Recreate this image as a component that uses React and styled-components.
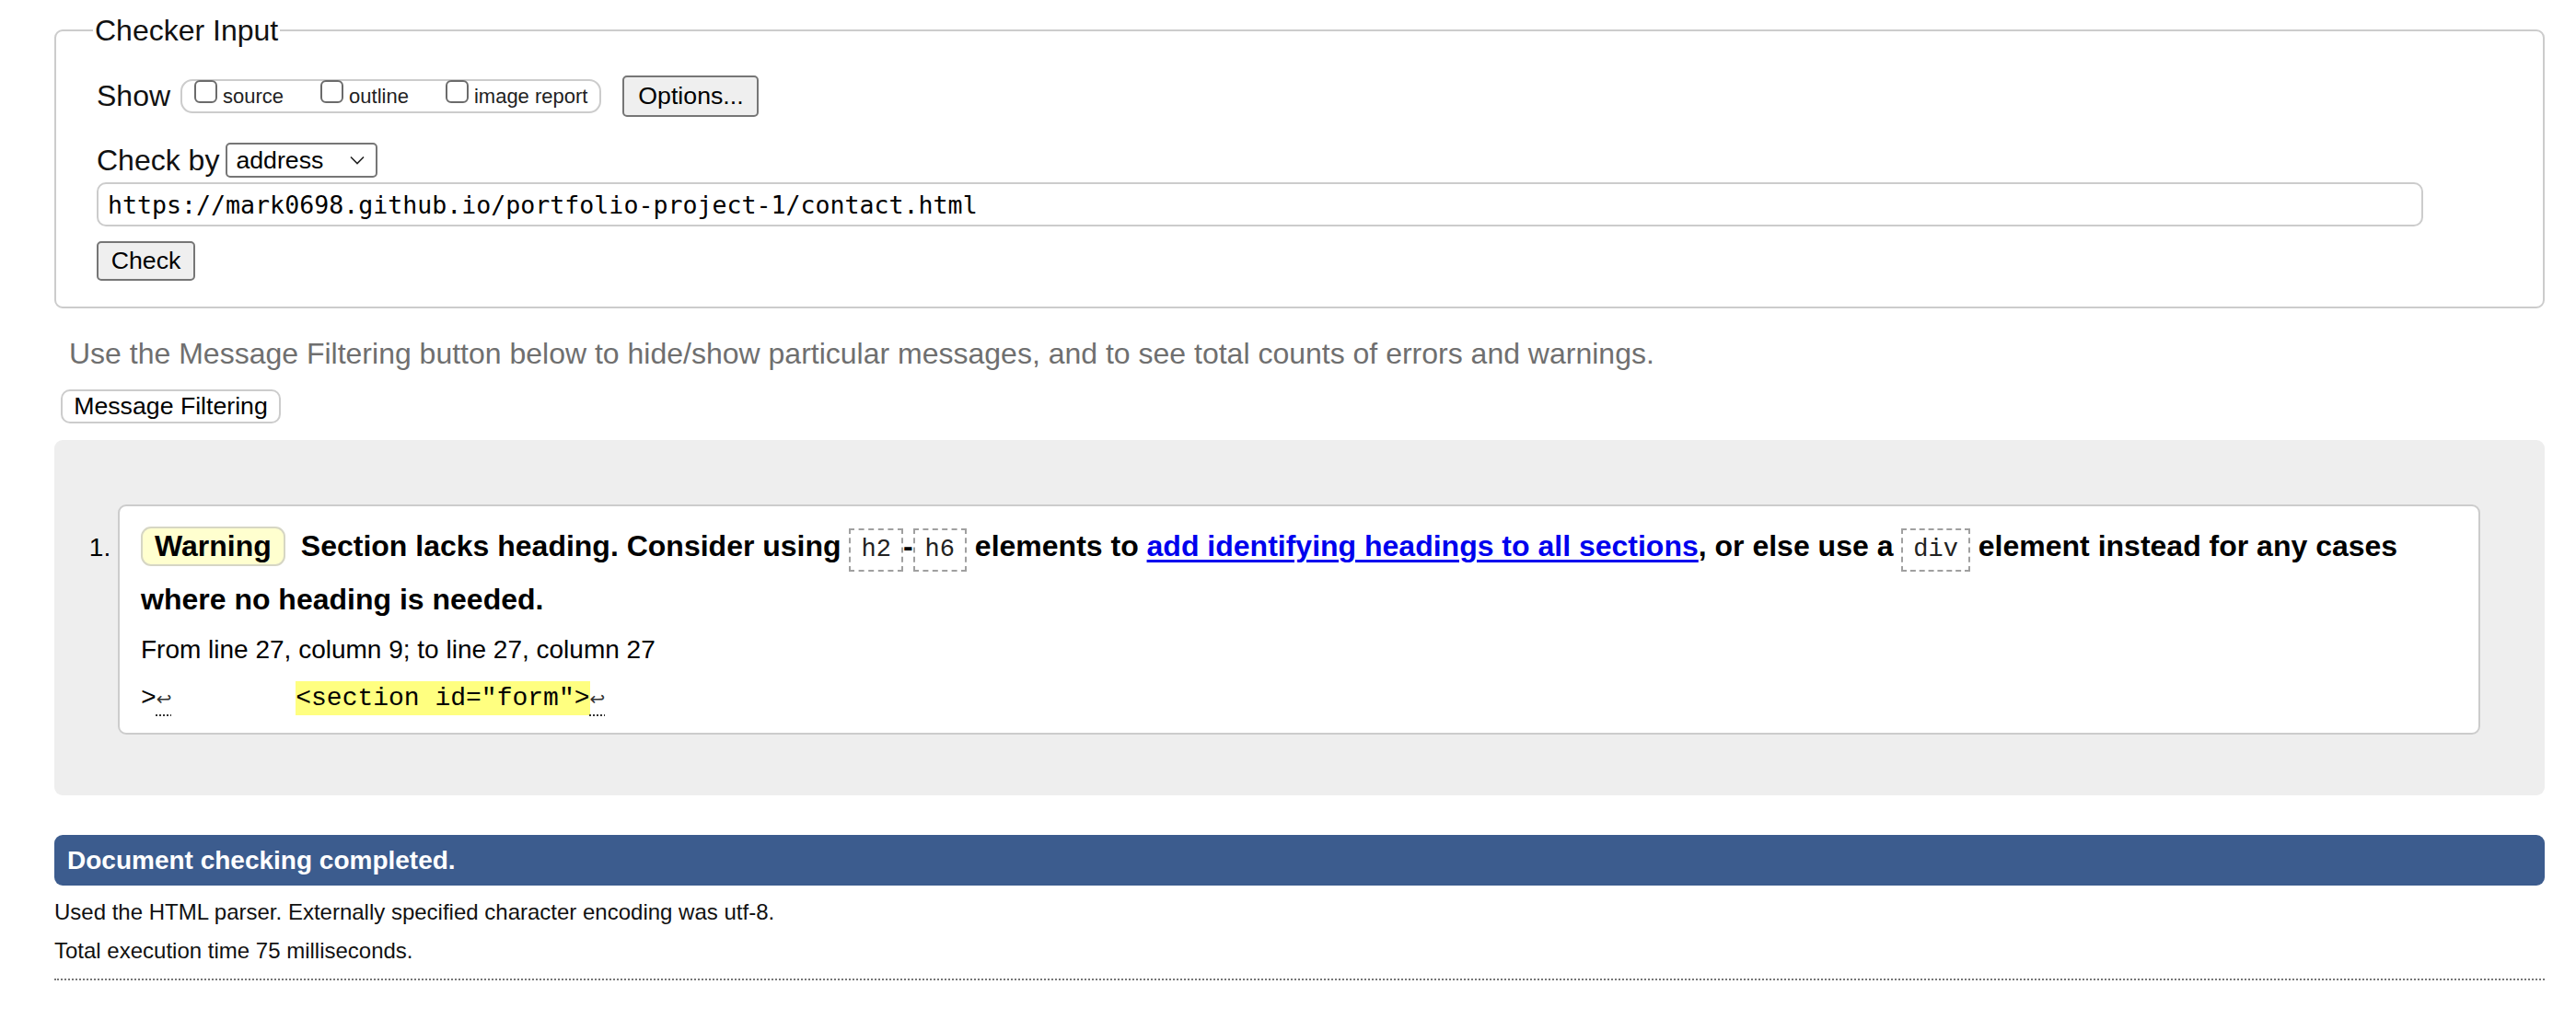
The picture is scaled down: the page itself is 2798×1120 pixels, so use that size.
import React from 'react';
import styled, { createGlobalStyle } from 'styled-components';

const GlobalStyle = createGlobalStyle`
  html, body {
    margin: 0;
    padding: 0;
    background: #fff;
  }
  body {
    font-family: "Liberation Sans", Arial, Helvetica, sans-serif;
    color: #000;
  }
`

const Chevron = () => (
    <svg width="16" height="10" viewBox="0 0 16 10" fill="none">
        <path d="M1 1.5 L8 8.5 L15 1.5" stroke="#222" strokeWidth="1.6" />
    </svg>
)

const App = () => {
    return (
        <Page>
            <GlobalStyle />
            <Fieldset>
                <Legend>Checker Input</Legend>
                <FieldBody>
                    <ShowRow>
                        <Label>Show</Label>
                        <OptionGroup>
                            <Option><Box type="checkbox" /><OptionText>source</OptionText></Option>
                            <Option><Box type="checkbox" /><OptionText>outline</OptionText></Option>
                            <Option last><Box type="checkbox" /><OptionText>image report</OptionText></Option>
                        </OptionGroup>
                        <Button wide>Options...</Button>
                    </ShowRow>
                    <CheckByRow>
                        <Label>Check by</Label>
                        <SelectBox>
                            <span>address</span>
                            <Chevron />
                        </SelectBox>
                    </CheckByRow>
                    <UrlInput readOnly defaultValue="https://mark0698.github.io/portfolio-project-1/contact.html" />
                    <CheckButton>Check</CheckButton>
                </FieldBody>
            </Fieldset>

            <Hint>Use the Message Filtering button below to hide/show particular messages, and to see total counts of errors and warnings.</Hint>
            <FilterButton>Message Filtering</FilterButton>

            <Results>
                <Item>
                    <Message>
                        <Badge>Warning</Badge>Section lacks heading. Consider using <Code>h2</Code>-<Code>h6</Code> elements to <Link href="#">add identifying headings to all sections</Link>, or else use a <Code>div</Code> element instead for any cases where no heading is needed.
                    </Message>
                    <Location>From line 27, column 9; to line 27, column 27</Location>
                    <Extract>
                        &gt;<Newline>↩</Newline>{'        '}<Highlight>&lt;section id="form"&gt;</Highlight><Newline>↩</Newline>
                    </Extract>
                </Item>
            </Results>

            <Completed>Document checking completed.</Completed>
            <Detail first>Used the HTML parser. Externally specified character encoding was utf-8.</Detail>
            <Detail>Total execution time 75 milliseconds.</Detail>
            <Rule />
        </Page>
    );
};

export default App;

const Page = styled.div`
    padding: 15px 34px 40px 59px;
`
const Fieldset = styled.fieldset`
    margin: 0;
    padding: 0 0 0 44px;
    border: 2px solid #ccc;
    border-radius: 9px;
    min-width: 0;
`
const Legend = styled.legend`
    font-size: 32px;
    line-height: 36px;
    padding: 0 2px;
    margin-left: -4px;
    color: #111;
`
const FieldBody = styled.div`
    padding: 31px 0 28px 0;
`
const ShowRow = styled.div`
    display: flex;
    align-items: center;
    height: 45px;
`
const Label = styled.span`
    font-size: 32px;
    color: #111;
    margin-right: 9px;
    white-space: nowrap;
`
const OptionGroup = styled.div`
    display: flex;
    align-items: flex-start;
    box-sizing: border-box;
    height: 37px;
    border: 2px solid #ccc;
    border-radius: 13px;
    padding: 0 13px 0 13px;
    margin-left: 2px;
`
const Option = styled.label`
    display: flex;
    align-items: flex-start;
    margin-right: ${props => props.last ? '0' : '40px'};
    white-space: nowrap;
`
const OptionText = styled.span`
    font-size: 22px;
    line-height: 22px;
    margin-top: 6px;
    color: #222;
`
const Box = styled.input`
    appearance: none;
    box-sizing: border-box;
    width: 25px;
    height: 25px;
    margin: -1px 6px 0 0;
    border: 2px solid #6b6b6b;
    border-radius: 6px;
    background: #fff;
`
const Button = styled.button`
    box-sizing: border-box;
    height: 45px;
    width: ${props => props.wide ? '148px' : 'auto'};
    margin-left: 23px;
    font-family: "Liberation Sans", Arial, sans-serif;
    font-size: 26.7px;
    color: #000;
    background: #efefef;
    border: 2px solid #767676;
    border-radius: 5px;
    padding: 0;
`
const CheckByRow = styled.div`
    display: flex;
    align-items: center;
    height: 38px;
    margin-top: 28px;
`
const SelectBox = styled.div`
    box-sizing: border-box;
    display: flex;
    align-items: center;
    justify-content: space-between;
    width: 165px;
    height: 38px;
    margin-left: -2px;
    padding: 0 12px 0 9px;
    border: 2px solid #767676;
    border-radius: 5px;
    font-size: 26.7px;
    color: #000;
`
const UrlInput = styled.input`
    display: block;
    box-sizing: border-box;
    width: 2527px;
    height: 48px;
    margin-top: 5px;
    padding: 0 0 0 10px;
    border: 2px solid #ccc;
    border-radius: 10px;
    font-family: "DejaVu Sans Mono", "Liberation Mono", monospace;
    font-size: 26.6px;
    color: #000;
    outline: none;
`
const CheckButton = styled(Button)`
    display: block;
    width: 107px;
    height: 43px;
    margin: 16px 0 0 0;
`
const Hint = styled.p`
    margin: 31px 0 0 16px;
    font-size: 32px;
    line-height: 37px;
    color: #6f6f6f;
`
const FilterButton = styled.button`
    display: block;
    box-sizing: border-box;
    width: 239px;
    height: 37px;
    margin: 20px 0 0 7px;
    padding: 0;
    background: #fff;
    border: 2px solid #ccc;
    border-radius: 10px;
    font-family: "Liberation Sans", Arial, sans-serif;
    font-size: 26.7px;
    color: #000;
`
const Results = styled.ol`
    margin: 18px 0 0 0;
    padding: 70px 70px 66px 69px;
    background: #eee;
    border-radius: 9px;
    list-style: decimal outside;
`
const Item = styled.li`
    font-size: 28px;
    background: #fff;
    border: 2px solid #ccc;
    border-radius: 9px;
    padding: 14px 24px 17px 23px;
`
const Message = styled.p`
    margin: 0;
    font-size: 32px;
    font-weight: bold;
    line-height: 58px;
`
const Badge = styled.span`
    display: inline-block;
    line-height: 39px;
    padding: 0 13px;
    margin-right: 17px;
    background: #ffffcf;
    border: 2px solid #d6d6c4;
    border-radius: 11px;
`
const Code = styled.code`
    display: inline-block;
    font-family: "Liberation Mono", "Courier New", monospace;
    font-weight: normal;
    font-size: 27px;
    line-height: 31px;
    padding: 6px 11px;
    border: 2px dashed #a0a0a0;
    color: #222;
`
const Link = styled.a`
    color: #0000ee;
    text-decoration: underline;
    text-decoration-thickness: 3px;
    text-underline-offset: 4px;
`
const Location = styled.p`
    margin: 6px 0 0 0;
    font-size: 28px;
    line-height: 40px;
`
const Extract = styled.p`
    margin: 13px 0 0 0;
    font-family: "Liberation Mono", "Courier New", monospace;
    font-size: 28px;
    line-height: 40px;
    white-space: pre;
`
const Newline = styled.b`
    display: inline-block;
    width: 17px;
    font-family: "DejaVu Sans", sans-serif;
    font-weight: normal;
    font-size: 20px;
    line-height: 20px;
    color: #333;
    text-decoration: underline dotted;
    text-underline-offset: 10px;
`
const Highlight = styled.span`
    background: #ffff80;
    padding: 3px 0;
`
const Completed = styled.div`
    display: flex;
    align-items: center;
    height: 55px;
    margin-top: 43px;
    padding-left: 14px;
    background: #3c5c8e;
    border-radius: 9px;
    color: #fff;
    font-size: 28px;
    font-weight: bold;
`
const Detail = styled.p`
    margin: ${props => props.first ? '8px' : '0'} 0 0 0;
    font-size: 24px;
    line-height: 42px;
    color: #111;
`
const Rule = styled.hr`
    margin: 9px 0 0 0;
    border: 0;
    border-top: 2px dotted #777;
`
